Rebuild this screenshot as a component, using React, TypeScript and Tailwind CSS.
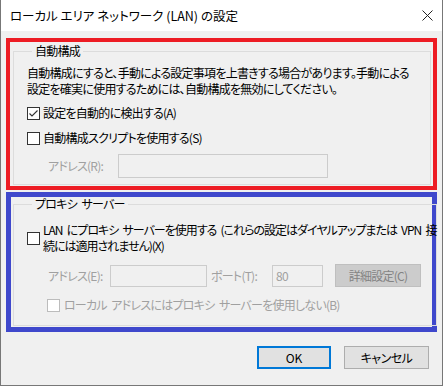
import React from 'react';

const jp = "font-['Noto_Sans_CJK_JP','Noto_Sans',sans-serif] [font-feature-settings:'palt']";

function Check({ checked = false, disabled = false }: { checked?: boolean; disabled?: boolean }) {
  return (
    <span
      className={`flex h-[13px] w-[13px] shrink-0 items-center justify-center border bg-white ${
        disabled ? 'border-[#bcbcbc]' : 'border-[#333333]'
      }`}
    >
      {checked && (
        <svg width="11" height="11" viewBox="0 0 11 11">
          <path d="M1.5 5.5 L4 8 L9.5 2.5" fill="none" stroke="#333333" strokeWidth="1.1" />
        </svg>
      )}
    </span>
  );
}

function Group({ title, className, children }: { title: string; className?: string; children: React.ReactNode }) {
  return (
    <fieldset className={`border border-[#dcdcdc] ${className ?? ''}`}>
      <legend className="ml-[5px] px-[3px] leading-[16px]">{title}</legend>
      {children}
    </fieldset>
  );
}

export default function App() {
  return (
    <div className={`flex h-[386px] w-[443px] flex-col border-x border-b border-[#777777] bg-[#f0f0f0] text-[12px] text-black ${jp}`}>
      {/* title bar */}
      <div className="flex h-[31px] shrink-0 items-center justify-between bg-white pl-[9px] pr-[9px]">
        <span className="text-[12.5px] leading-[16px]">ローカル エリア ネットワーク (LAN) の設定</span>
        <svg width="11" height="11" viewBox="0 0 11 11">
          <path d="M0.5 0.5 L10.5 10.5 M10.5 0.5 L0.5 10.5" stroke="#222" strokeWidth="1" />
        </svg>
      </div>

      <div className="flex flex-col px-[5px] pt-[7px] tracking-[-0.75px] [word-spacing:2.5px]">
        {/* automatic configuration */}
        <div className="h-[152px] border-4 border-[#ed1c24] pl-[3px] pr-[2px]">
          <Group title="自動構成" className="mt-px h-[142px] pl-[13px] pt-[6px]">
            <div className="whitespace-nowrap leading-[16px]">
              <div>自動構成にすると、手動による設定事項を上書きする場合があります。手動による</div>
              <div>設定を確実に使用するためには、自動構成を無効にしてください。</div>
            </div>
            <label className="mt-[8px] flex h-[16px] items-center gap-[3px]">
              <Check checked />
              <span>設定を自動的に検出する(A)</span>
            </label>
            <label className="mt-[9px] flex h-[16px] items-center gap-[3px]">
              <Check />
              <span>自動構成スクリプトを使用する(S)</span>
            </label>
            <div className="mt-[8px] flex items-center">
              <span className="ml-[21px] w-[70px] text-[#a0a0a0]">アドレス(R):</span>
              <div className="h-[24px] w-[210px] border border-[#cccccc] bg-[#f0f0f0]" />
            </div>
          </Group>
        </div>

        {/* proxy server */}
        <div className="mt-[2px] h-[140px] border-[5px] border-[#3f48cc] pl-[2px] pr-[1px]">
          <Group title="プロキシ サーバー" className="-mt-px h-[130px] pl-[13px] pt-[10px]">
            <label className="flex items-center gap-[3px]">
              <Check />
              <span className="whitespace-nowrap leading-[16px] tracking-[-1px]">
                LAN にプロキシ サーバーを使用する (これらの設定はダイヤルアップまたは VPN 接
                <br />
                続には適用されません)(X)
              </span>
            </label>
            <div className="mt-[10px] flex items-center text-[#a0a0a0]">
              <span className="ml-[21px] w-[62px]">アドレス(E):</span>
              <div className="h-[22px] w-[97px] border border-[#cccccc] bg-[#f0f0f0]" />
              <span className="ml-[4px] w-[61px]">ポート(T):</span>
              <div className="flex h-[22px] w-[51px] items-center border border-[#cccccc] bg-[#f0f0f0] pl-[3px]">80</div>
              <div className="ml-[12px] flex h-[23px] w-[86px] items-center justify-center border border-[#bfbfbf] bg-[#cccccc] text-[#838383]">
                詳細設定(C)
              </div>
            </div>
            <label className="mt-[10px] flex h-[16px] items-center gap-[4px] pl-[20px] text-[#a0a0a0]">
              <Check disabled />
              <span>ローカル アドレスにはプロキシ サーバーを使用しない(B)</span>
            </label>
          </Group>
        </div>
      </div>

      {/* footer buttons */}
      <div className="mt-[14px] flex justify-end gap-[13px] pr-[13px]">
        <button className="h-[23px] w-[74px] border-2 border-[#0078d7] bg-[#e1e1e1] leading-[16px]">OK</button>
        <button className="h-[23px] w-[85px] border border-[#adadad] bg-[#e1e1e1] leading-[16px] tracking-[-0.5px]">
          キャンセル
        </button>
      </div>
    </div>
  );
}
